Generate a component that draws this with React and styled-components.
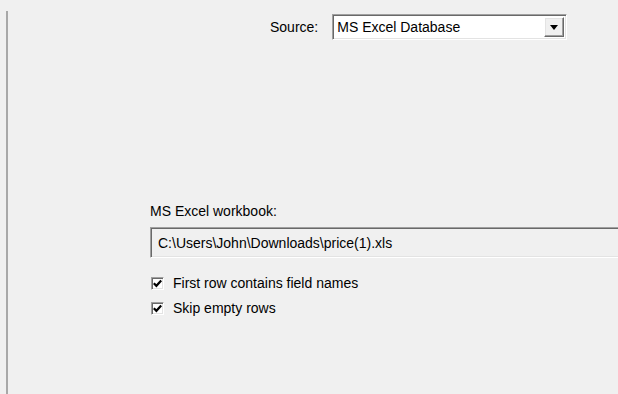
import React from 'react'
import styled, { createGlobalStyle } from 'styled-components'

const GlobalStyle = createGlobalStyle`
  html, body {
    margin: 0;
    padding: 0;
    background: #f0f0f0;
  }
  body {
    font-family: 'Liberation Sans', Arial, sans-serif;
    font-size: 14px;
    color: #000;
  }
`

const Frame = styled.div`
  width: 618px;
  height: 394px;
  box-sizing: border-box;
  padding: 11px 0 0 6px;
  overflow: hidden;
`

const Panel = styled.div`
  height: 100%;
  box-sizing: border-box;
  border-left: 2px solid #a8a8a8;
  padding-top: 3px;
`

const SourceRow = styled.div`
  display: flex;
  align-items: center;
  padding-left: 262px;
  gap: 14px;
`

const Label = styled.span`
  white-space: nowrap;
  line-height: 16px;
`

const Sunken = styled.div`
  box-sizing: border-box;
  border-style: solid;
  border-width: 1px;
  border-color: #a0a0a0 #ffffff #ffffff #a0a0a0;
  box-shadow: inset 1px 1px 0 #696969, inset -1px -1px 0 #e3e3e3;
`

const Combo = styled(Sunken)`
  width: 235px;
  height: 26px;
  background: #fff;
  display: flex;
  align-items: center;
  padding: 2px 2px 2px 4px;
`

const ComboText = styled.span`
  flex: 1;
`

const DropButton = styled.div`
  width: 20px;
  height: 100%;
  box-sizing: border-box;
  background: #f0f0f0;
  border-style: solid;
  border-width: 1px;
  border-color: #ffffff #696969 #696969 #ffffff;
  box-shadow: inset -1px -1px 0 #a0a0a0, inset 1px 1px 0 #e3e3e3;
  display: flex;
  align-items: center;
  justify-content: center;
`

const Arrow = styled.span`
  width: 0;
  height: 0;
  border-left: 4px solid transparent;
  border-right: 4px solid transparent;
  border-top: 5px solid #000;
  margin-top: 1px;
`

const WorkbookSection = styled.div`
  padding-left: 142px;
  margin-top: 163px;
  display: flex;
  flex-direction: column;
`

const PathBox = styled(Sunken)`
  margin-top: 8px;
  width: 520px;
  height: 31px;
  background: #f0f0f0;
  display: flex;
  align-items: center;
  padding-left: 7px;
`

const CheckList = styled.div`
  margin-top: 18px;
  display: flex;
  flex-direction: column;
  gap: 11px;
`

const CheckRow = styled.label`
  display: flex;
  align-items: center;
  gap: 9px;
  height: 14px;
`

const Box = styled(Sunken)`
  width: 13px;
  height: 13px;
  margin-left: 1px;
  background: #fff;
  display: flex;
  align-items: center;
  justify-content: center;
`

const Check = () => (
  <svg width="9" height="9" viewBox="0 0 9 9">
    <path d="M0.8 4.2 L3.4 6.8 L8.2 1.6" fill="none" stroke="#000" strokeWidth="2.2" />
  </svg>
)

const Checkbox = ({ label }) => (
  <CheckRow>
    <Box><Check /></Box>
    <Label>{label}</Label>
  </CheckRow>
)

export default function App () {
  return (
    <>
      <GlobalStyle />
      <Frame>
        <Panel>
          <SourceRow>
            <Label>Source:</Label>
            <Combo>
              <ComboText>MS Excel Database</ComboText>
              <DropButton><Arrow /></DropButton>
            </Combo>
          </SourceRow>
          <WorkbookSection>
            <Label>MS Excel workbook:</Label>
            <PathBox>C:\Users\John\Downloads\price(1).xls</PathBox>
            <CheckList>
              <Checkbox label='First row contains field names' />
              <Checkbox label='Skip empty rows' />
            </CheckList>
          </WorkbookSection>
        </Panel>
      </Frame>
    </>
  )
}
